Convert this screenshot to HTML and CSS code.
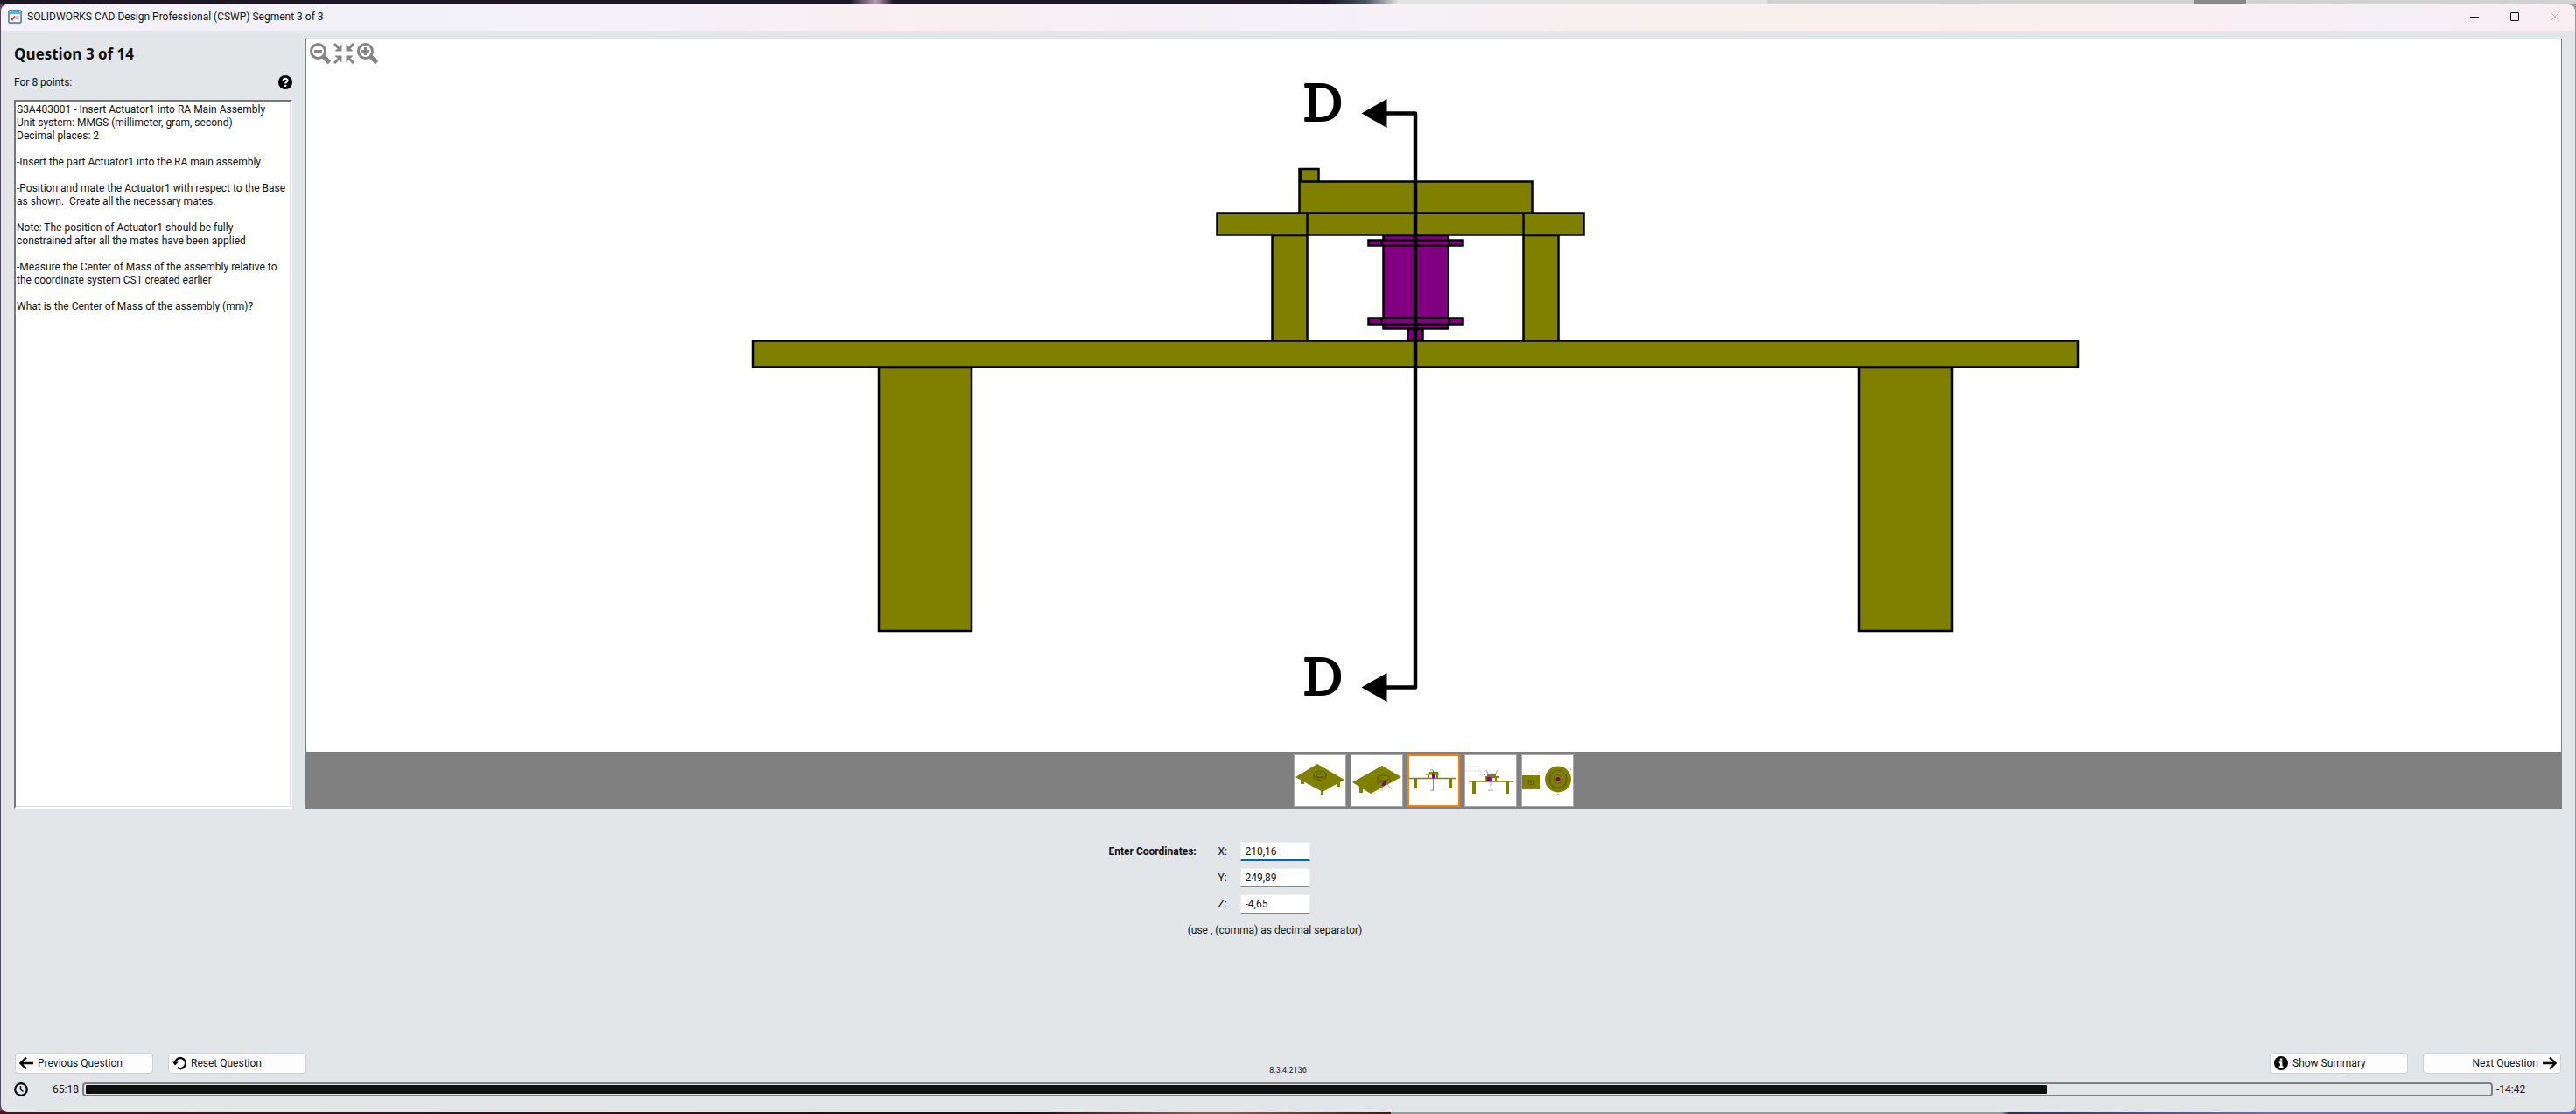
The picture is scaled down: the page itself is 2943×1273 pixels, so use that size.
FILE: index.html
```html
<!DOCTYPE html>
<html lang="en">
<head>
<meta charset="utf-8">
<title>SOLIDWORKS CAD Design Professional (CSWP) Segment 3 of 3</title>
<link rel="stylesheet" href="styles.css">
</head>
<body>
<div class="window">
  <header class="titlebar">
    <svg class="app-icon" viewBox="0 0 16 16" aria-hidden="true">
      <rect x=".5" y=".5" width="15" height="15" rx="1.5" fill="#7f97a8" stroke="#6d8ba2"/>
      <rect x="1" y="1" width="14" height="4" fill="#4eb4ee"/>
      <path d="M2 2.500h2M11 2.500h1M13 2.500h1" stroke="#c9ecff"/>
      <rect x="2" y="5" width="12" height="9" fill="#f4f7f9"/>
      <path d="M3.500 9.500l1.500 2 3-4" fill="none" stroke="#d8322c" stroke-width="1.500"/>
      <path d="M8.500 8h4M8.500 10.500h4" stroke="#9aa7b0"/>
    </svg>
    <span class="caption">SOLIDWORKS CAD Design Professional (CSWP) Segment 3 of 3</span>
    <div class="window-controls">
      <button type="button" aria-label="Minimize"><svg viewBox="0 0 10 10"><path d="M0 5.500h10" stroke="#000"/></svg></button>
      <button type="button" aria-label="Maximize"><svg viewBox="0 0 10 10"><rect x=".5" y=".5" width="9" height="9" rx=".5" fill="none" stroke="#000"/></svg></button>
      <button type="button" aria-label="Close" disabled><svg viewBox="0 0 10 10"><path d="M0 0l10 10M10 0L0 10" stroke="#bdb6bb"/></svg></button>
    </div>
  </header>

  <main class="content">
    <section class="question">
      <h1>Question 3 of 14</h1>
      <div class="points">
        <span>For 8 points:</span>
        <button type="button" class="help" aria-label="Help">
          <svg viewBox="0 0 16 16"><circle cx="8" cy="8" r="8"/><path d="M5.600 6.300C5.600 3 10.600 3.200 10.600 6c0 1.700-2.400 1.700-2.400 3.600M8.200 10.800v2.200" fill="none" stroke="#fff" stroke-width="2.100"/></svg>
        </button>
      </div>
      <div class="question-text" tabindex="0">S3A403001 - Insert Actuator1 into RA Main Assembly
Unit system: MMGS (millimeter, gram, second)
Decimal places: 2

-Insert the part Actuator1 into the RA main assembly

-Position and mate the Actuator1 with respect to the Base
as shown.  Create all the necessary mates.

Note: The position of Actuator1 should be fully
constrained after all the mates have been applied

-Measure the Center of Mass of the assembly relative to
the coordinate system CS1 created earlier

What is the Center of Mass of the assembly (mm)?</div>
    </section>

    <section class="viewer">
      <div class="zoom-tools">
        <button type="button" aria-label="Zoom out"><svg viewBox="0 0 24 24"><circle cx="9.500" cy="9.500" r="8" fill="#fff" stroke="#858585" stroke-width="3"/><path d="M15.500 15.500l7 7" stroke="#858585" stroke-width="5"/><path d="M5 9.500h9" stroke="#858585" stroke-width="3"/></svg></button>
        <button type="button" aria-label="Zoom to fit"><svg viewBox="0 0 24 24"><path d="M1 1l6 6M23 1l-6 6M1 23l6-6M23 23l-6-6" stroke="#858585" stroke-width="3"/><path d="M9.500 1.500v8h-8l2.500-2.500h3v-3zM14.500 1.500v8h8l-2.500-2.500h-3v-3zM9.500 22.500v-8h-8l2.500 2.500h3v3zM14.500 22.500v-8h8l-2.500 2.500h-3v3z" fill="#858585"/></svg></button>
        <button type="button" aria-label="Zoom in"><svg viewBox="0 0 24 24"><circle cx="9.500" cy="9.500" r="8" fill="#fff" stroke="#858585" stroke-width="3"/><path d="M15.500 15.500l7 7" stroke="#858585" stroke-width="5"/><path d="M5 9.500h9M9.500 5v9" stroke="#858585" stroke-width="3"/></svg></button>
      </div>
      <svg class="drawing" viewBox="350 45 2576 814" role="img" aria-label="Front view of the assembly with section line D-D">
        <g class="olive">
          <rect x="1004" y="420" width="106" height="301"/>
          <rect x="2124" y="420" width="106" height="301"/>
          <rect x="860" y="389.500" width="1514" height="30"/>
          <path d="M1453.500 389V269h40v120M1740.500 389V269h40v120"/>
          <path d="M1484.500 243V193h22v14.500h244V243"/>
          <path d="M1486.500 193v14.500h20" fill="none"/>
          <rect x="1390.500" y="243.500" width="419" height="25"/>
          <path d="M1493.500 243v26M1740.500 243v26"/>
        </g>
        <g class="purple">
          <rect x="1608.500" y="376" width="17" height="13"/>
          <rect x="1580.500" y="269" width="74" height="106.500"/>
          <rect x="1563.500" y="274.500" width="108" height="6"/>
          <rect x="1563.500" y="363.500" width="108" height="7"/>
          <path d="M1578.500 274v7M1655.500 274v7M1578.500 363v8M1655.500 363v8"/>
        </g>
        <path d="M1584 129.500h33V785.500H1584" fill="none" stroke="#000" stroke-width="4.500" stroke-linejoin="round"/>
        <path d="M1555.500 129.500l29-16.500v33zM1555.500 785.500l29-16.500v33z"/>
        <text class="section-mark" x="1488" y="138">D</text>
        <text class="section-mark" x="1488" y="794">D</text>
      </svg>

      <div class="thumbs">
        <button type="button" aria-label="Isometric view"><svg viewBox="1 1 58 58">
          <path d="M8 29h4v5H8zM49 32h4v5h-4zM31 40h3v7h-3z" fill="#808000"/>
          <path d="M27 11L58 29 33 43 2 26z" fill="#808000"/>
          <g fill="none" stroke="#4a4a10" stroke-width=".7"><ellipse cx="30" cy="23" rx="7" ry="4"/><ellipse cx="30" cy="24" rx="4" ry="2"/><path d="M23 23v4l7 3 7-3v-4M28 28l2 1"/></g>
        </svg></button>
        <button type="button" aria-label="Section isometric view"><svg viewBox="1 1 58 58">
          <path d="M10 36h4v8h-4z" fill="#808000"/>
          <path d="M36 13L58 26 23 45 2 32z" fill="#808000"/>
          <g fill="none" stroke="#4a4a10" stroke-width=".7"><ellipse cx="38" cy="27" rx="7" ry="3"/><path d="M31 27v6l6-2M45 28v4"/></g>
          <path d="M36 33l5-4v5l-5 3z" fill="#800080"/>
          <path d="M36 35v7M42 34l5 6" stroke="#888" stroke-width=".7"/>
        </svg></button>
        <button type="button" class="selected" aria-label="Front view" aria-pressed="true"><svg viewBox="2 2 56 56">
          <path d="M2 27.500h54" stroke="#808000" stroke-width="1.500"/>
          <path d="M7 28h4v11H7zM47 28h4v11h-4zM25 20h10v2H25zM21 22h15v1.500H21zM23 22h2v5h-2zM33 22h2v5h-2z" fill="#808000"/>
          <path d="M28 23h4v4h-4z" fill="#800080"/>
          <path d="M29.500 18v24M26 18h3M26 41h3" stroke="#444" stroke-width=".6"/>
        </svg></button>
        <button type="button" aria-label="Section view"><svg viewBox="1 1 58 58">
          <path d="M5 31h50" stroke="#808000" stroke-width="1.500"/>
          <path d="M9 31h4v14H9zM47 31h4v14h-4zM26 23h10v2H26zM23 25h16v2H23zM24 26h2v5h-2zM35 26h2v5h-2z" fill="#808000"/>
          <path d="M26 26h6v5h-6z" fill="#800080"/>
          <path d="M25 18l3 6M38 18l-3 5M21 22l3 3M30 23v13M27 41h6" stroke="#777" stroke-width=".7"/>
          <path d="M2 14h15v5H2zM6 14v5" fill="none" stroke="#ccc" stroke-width=".5"/>
        </svg></button>
        <button type="button" aria-label="Top view"><svg viewBox="1 1 58 58">
          <rect x="1" y="24" width="20" height="16" fill="#808000"/>
          <circle cx="42" cy="28.500" r="15" fill="#808000"/>
          <g fill="none" stroke="#4a4a10" stroke-width=".6"><circle cx="11" cy="32" r="3"/><circle cx="11" cy="32" r="1"/><circle cx="42" cy="28.500" r="10"/><circle cx="42" cy="28.500" r="5"/><path d="M33 22v13l4 3h10l4-3V22"/></g>
          <circle cx="42" cy="28.500" r="2.500" fill="#800080"/>
          <path d="M11 19h10v3H11z" fill="none" stroke="#ccc" stroke-width=".5"/>
          <path d="M41 46h2M56 17h1" stroke="#777"/>
        </svg></button>
      </div>
    </section>
  </main>

  <form class="answer">
    <strong class="prompt">Enter Coordinates:</strong>
    <label for="x">X:</label><input id="x" class="active" type="text" value="210,16">
    <label for="y">Y:</label><input id="y" type="text" value="249,89">
    <label for="z">Z:</label><input id="z" type="text" value="-4,65">
    <p class="hint">(use , (comma) as decimal separator)</p>
  </form>

  <footer class="footer">
    <nav class="actions">
      <button type="button"><svg viewBox="0 0 16 16"><path d="M16 8H2M8 1.500L1.500 8 8 14.500" fill="none" stroke="#000" stroke-width="2.400"/></svg>Previous Question</button>
      <button type="button"><svg viewBox="0 0 16 16"><path d="M3 8A6 6 0 1 1 5.500 12.900" fill="none" stroke="#000" stroke-width="2.300"/><path d="M0 6.500h7L3 10.500z"/></svg>Reset Question</button>
      <span class="version">8.3.4.2136</span>
      <button type="button"><svg viewBox="0 0 16 16"><circle cx="8" cy="8" r="8"/><path d="M6.800 2.500h2.600v2.200H6.800zM5.800 6.300h3.600v5h1.100v1.900H5.800v-1.900h1.100v-3H5.800z" fill="#fff"/></svg>Show Summary</button>
      <button type="button" class="next">Next Question<svg viewBox="0 0 16 16"><path d="M0 8h14M8 1.500L14.500 8 8 14.500" fill="none" stroke="#000" stroke-width="2.400"/></svg></button>
    </nav>
    <div class="timer">
      <svg class="clock" viewBox="0 0 16 16" aria-hidden="true"><circle cx="8" cy="8" r="6.800" fill="none" stroke="#000" stroke-width="2.200"/><path d="M7.500 4v4l3 2.500" fill="none" stroke="#000" stroke-width="1.500"/></svg>
      <span class="elapsed">65:18</span>
      <progress value="3918" max="4800" aria-label="Time used"></progress>
      <span class="remaining">-14:42</span>
    </div>
  </footer>
</div>
</body>
</html>
```
FILE: styles.css
```css
* { box-sizing: border-box; }

body {
  margin: 0;
  min-height: 100vh;
  padding: 5px 1px 2px;
  display: flex;
  font: 12px/15px Roboto, "Open Sans", sans-serif;
  color: #111;
  background:
    linear-gradient(90deg, #55101a, #2a0812 40%, #a04a40 46%, #a04a40 48%, #5a0f0c 54%, #999 54%, #999 77.700%, #2c2f60 78%, #6a6ac8 88%) bottom / 100% 3px no-repeat,
    linear-gradient(90deg, #1c1924 33%, #b79ab8 34%, #1c1924 34.700%, #1c1924 51.500%, #47525c 53%, #e2e2e2 54.300%, #e2e2e2 68.600%, #d2d2d2 68.600%, #d2d2d2 85.200%, #888 85.200%, #888 87.200%, #d2d2d2 87.200%) top / 100% 4px no-repeat,
    linear-gradient(90deg, #55485a 50%, #9a9a9a 54%);
}

button, input { font: inherit; color: inherit; }

button {
  display: flex;
  align-items: center;
  justify-content: center;
  padding: 0;
  border: 0;
  background: none;
}

.window {
  flex: 1;
  display: flex;
  flex-direction: column;
  overflow: hidden;
  border-radius: 8px;
  background: #e2e6e9;
}

.titlebar {
  display: flex;
  align-items: center;
  gap: 6px;
  height: 30px;
  padding: 0 0 2px 8px;
  background: linear-gradient(90deg, #f3f2f8, #f4f1f8 25%, #faeff2 35%, #f4f1f8 50%, #f9f0ec 70%, #f9eef2 85%, #f4f0f6 93%, #fbeef2);
}

.app-icon { width: 16px; height: 16px; }
.caption { flex: 1; }
.window-controls { display: flex; }
.window-controls button { width: 46px; height: 28px; }
.window-controls svg { width: 10px; height: 10px; }

.content {
  flex: 1;
  display: flex;
  gap: 15px;
  padding: 9px 15px 0;
}

.question {
  width: 318px;
  display: flex;
  flex-direction: column;
}

h1 {
  margin: 6px 0 0;
  font-family: "Open Sans", sans-serif;
  font-size: 17px;
  line-height: 24px;
}

.points {
  display: flex;
  justify-content: space-between;
  align-items: center;
  margin: 10px 0;
  height: 20px;
}

.help svg { width: 16px; height: 16px; }

.question-text {
  flex: 1;
  padding: 2px 1px;
  white-space: pre-wrap;
  background: #fff;
  border: 2px solid #fff;
  border-top-color: #777;
  border-left-color: #777;
  box-shadow: inset -1px -1px #ddd;
}

.viewer {
  position: relative;
  flex: 1;
  display: flex;
  flex-direction: column;
  background: #fff;
  border: 1px solid #808080;
  border-bottom: 0;
}

.zoom-tools {
  position: absolute;
  top: 4px;
  left: 4px;
  display: flex;
  gap: 3px;
}

.zoom-tools svg { width: 24px; height: 24px; }

.drawing {
  flex: 1;
  width: 100%;
  min-height: 0;
}

.olive, .purple { stroke: #000; stroke-width: 2.500; }
.olive { fill: #808000; }
.purple { fill: #800080; }

.section-mark {
  font: 58px "DejaVu Serif", serif;
  stroke: #000;
  stroke-width: 2;
  stroke-linejoin: round;
}

.thumbs {
  display: flex;
  justify-content: center;
  align-items: center;
  gap: 5px;
  height: 65px;
  background: #808080;
}

.thumbs button {
  width: 60px;
  height: 60px;
  border: 1px solid #a8a8a8;
  background: #fff;
}

.thumbs .selected { border: 2px solid #ff8000; }
.thumbs svg { width: 100%; height: 100%; }

.answer {
  display: grid;
  grid-template-columns: 125px 25px 80px 180px;
  grid-auto-rows: 22px;
  row-gap: 8px;
  justify-content: center;
  align-items: center;
  height: 279px;
  align-content: start;
  padding-top: 38px;
}

.answer label { grid-column: 2; }
.answer .prompt { grid-column: 1; white-space: nowrap; }

.answer input {
  width: 80px;
  height: 22px;
  padding: 0 5px;
  border: 1px solid #eee;
  border-bottom-color: #868686;
  border-radius: 1px;
  background: #fff;
  outline: 0;
}

.answer input.active {
  border-bottom: 2px solid #0067c0;
  background: linear-gradient(#000, #000) 5px 2px / 1px 15px no-repeat #fff;
}

.hint {
  grid-column: 1 / -1;
  margin: 0;
  padding-right: 30px;
  text-align: center;
}

.footer { padding: 0 15px 18px; }

.actions {
  display: flex;
  gap: 17px;
  height: 24px;
  padding: 0 1px;
}

.actions button {
  width: 158px;
  height: 24px;
  justify-content: flex-start;
  gap: 5px;
  padding: 0 4px;
  border: 1px solid #cdd0d3;
  border-radius: 4px;
  background: #fdfdfd;
}

.actions .next { justify-content: flex-end; }
.actions svg { width: 16px; height: 16px; }

.version {
  flex: 1;
  align-self: flex-end;
  text-align: center;
  font-size: 9px;
  line-height: 8px;
}

.timer {
  display: flex;
  align-items: center;
  gap: 4px;
  margin-top: 10px;
  height: 16px;
}

.clock { width: 16px; height: 16px; }
.elapsed { width: 54px; text-align: right; }
.remaining { width: 75px; }

progress {
  appearance: none;
  flex: 1;
  min-width: 0;
  height: 16px;
  padding: 1px 2px;
  border: 2px solid #808080;
  border-radius: 4px;
  background: none;
}

progress::-webkit-progress-bar { background: none; }
progress::-webkit-progress-value { background: #0f0f0f; border-radius: 1px; }
```
